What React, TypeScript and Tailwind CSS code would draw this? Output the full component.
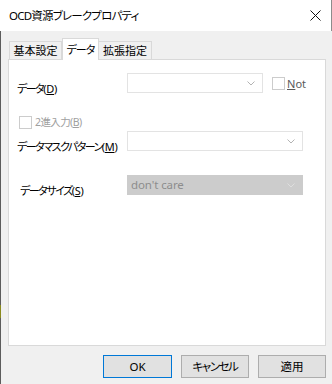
import React from "react";

const font = "font-['Noto_Sans','Noto_Sans_CJK_JP',sans-serif] [font-feature-settings:'palt']";

function Chevron({ color = "#a6a6a6" }: { color?: string }) {
  return (
    <svg width="8" height="5" viewBox="0 0 8 5" className="shrink-0">
      <path d="M0.5 0.5 L4 4 L7.5 0.5" fill="none" stroke={color} strokeWidth="1" />
    </svg>
  );
}

function Combo({ width, disabled, text }: { width: string; disabled?: boolean; text?: string }) {
  return (
    <div
      className={`${width} h-[20px] flex items-center justify-between pl-[3px] pr-[7px] border shrink-0 ${
        disabled ? "bg-[#cccccc] border-[#cccccc]" : "bg-white border-[#e3e3e3]"
      }`}
    >
      <span className="text-[11.5px] leading-none text-[#8d8d8d] tracking-[-0.1px]">{text ?? ""}</span>
      <Chevron color={disabled ? "#dedede" : "#b3b3b3"} />
    </div>
  );
}

function Box() {
  return <div className="w-[13px] h-[13px] border border-[#cccccc] bg-white shrink-0" />;
}

function Label({ kana, mn, extra }: { kana: string; mn: string; extra?: string }) {
  return (
    <div className={`w-[110px] pt-[10px] ${extra ?? ""}`}>
      <span className="tracking-[-1.5px]">{kana}</span>
      <span className="tracking-[-0.3px]">
        (<span className="underline">{mn}</span>)
      </span>
    </div>
  );
}

export default function App() {
  return (
    <div className={`w-[332px] h-[384px] bg-[#f0f0f0] flex flex-col relative overflow-hidden whitespace-nowrap ${font}`}>
      {/* Title bar */}
      <div className="h-[31px] bg-white flex items-center justify-between pl-[9px] pr-[10px] border-r border-[#8c8c8c] shrink-0">
        <span className="text-[11.5px] text-black leading-none tracking-[-0.8px]">OCD資源ブレークプロパティ</span>
        <svg width="11" height="11" viewBox="0 0 11 11">
          <path d="M0.5 0.5 L10.5 10.5 M10.5 0.5 L0.5 10.5" stroke="#111" strokeWidth="1" />
        </svg>
      </div>

      {/* Body */}
      <div className="flex-1 flex flex-col border-l border-[#5c5c5c] pl-[7px] pr-[6px]">
        {/* Tabs */}
        <div className="h-[28px] flex items-end pl-[1px] shrink-0">
          <div className="w-[53px] h-[18px] border border-b-0 border-[#d9d9d9] bg-[#f0f0f0] flex items-center justify-center text-[11px] text-black leading-none">
            基本設定
          </div>
          <div className="w-[37px] h-[22px] -mb-px relative z-10 border border-b-0 border-[#d9d9d9] bg-white flex items-center justify-center text-[11px] text-black leading-none tracking-[-1px]">
            データ
          </div>
          <div className="w-[53px] h-[18px] border border-b-0 border-l-0 border-[#d9d9d9] bg-[#f0f0f0] flex items-center justify-center text-[11px] text-black leading-none">
            拡張指定
          </div>
        </div>

        {/* Panel */}
        <div className="h-[287px] bg-white border border-[#d9d9d9] flex flex-col pl-[8px] text-[11px] leading-none text-black shrink-0">
          {/* Row 1 */}
          <div className="mt-[13px] h-[20px] flex items-center">
            <Label kana="データ" mn="D" />
            <Combo width="w-[136px]" />
            <div className="ml-[9px] flex items-center gap-[2px]">
              <Box />
              <span className="text-[#5a5a5a]">
                <span className="underline">N</span>ot
              </span>
            </div>
          </div>

          {/* Row 2 */}
          <div className="mt-[23px] h-[13px] flex items-center gap-[3px] pl-[2px]">
            <Box />
            <span className="text-[#a0a0a0] text-[10.5px] tracking-[-0.6px]">
              2進入力(<span className="underline">B</span>)
            </span>
          </div>

          {/* Row 3 */}
          <div className="mt-[2px] h-[20px] flex items-center">
            <Label kana="データマスクパターン" mn="M" extra="pt-[11px]" />
            <Combo width="w-[176px]" />
          </div>

          {/* Row 4 */}
          <div className="mt-[24px] h-[20px] flex items-center">
            <Label kana="データサイズ" mn="S" extra="pl-[3px]" />
            <Combo width="w-[176px]" disabled text="don't care" />
          </div>
        </div>

        {/* Buttons */}
        <div className="mt-[9px] flex justify-end gap-[9px]">
          <button className="w-[69px] h-[23px] bg-[#e1e1e1] border border-[#0078d7] text-[11.5px] text-black leading-none">
            OK
          </button>
          <button className="w-[68px] h-[23px] bg-[#e1e1e1] border border-[#adadad] text-[11.5px] text-black leading-none tracking-[-1.4px]">
            キャンセル
          </button>
          <button className="w-[68px] h-[23px] bg-[#e1e1e1] border border-[#adadad] text-[11.5px] text-black leading-none">
            適用
          </button>
        </div>
      </div>

      {/* window edge accent */}
      <div className="absolute left-0 top-[305px] w-[1px] h-[13px] bg-[#8a8a1e]" />
    </div>
  );
}
